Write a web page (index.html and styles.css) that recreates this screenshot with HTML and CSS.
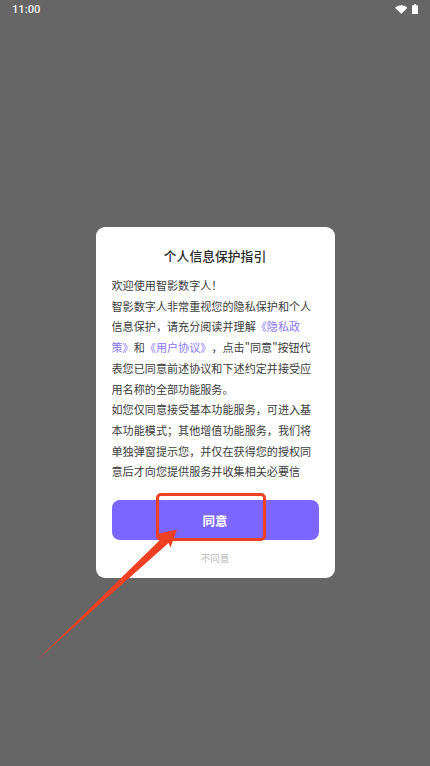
FILE: index.html
```html
<!DOCTYPE html>
<html lang="zh-CN">
<head>
<meta charset="utf-8">
<title>个人信息保护指引</title>
<link rel="stylesheet" href="styles.css">
</head>
<body>
<div class="screen">
  <header class="status">
    <span class="time">11:00</span>
    <span class="status-icons">
      <svg class="wifi" width="12.500" height="9" viewBox="0 0 13 9"><path d="M0 2.6C1.800.9 4 0 6.500 0S11.200.9 13 2.600L6.500 9z" fill="#fff"/></svg>
      <svg class="battery" width="6" height="10.500" viewBox="0 0 6 10"><path d="M2 0h2v1h1.300c.4 0 .7.300.7.700v7.600c0 .4-.3.700-.7.700H.7C.3 10 0 9.700 0 9.300V1.700C0 1.300.3 1 .7 1H2z" fill="#fff"/></svg>
    </span>
  </header>
  <main class="stage">
    <section class="dialog">
      <h1 class="title">个人信息保护指引</h1>
      <div class="body">
        <p>欢迎使用智影数字人！</p>
        <p>智影数字人非常重视您的隐私保护和个人信息保护，请充分阅读并理解<a class="link">《隐私政策》</a>和<a class="link">《用户协议》</a>，点击"同意"按钮代表您已同意前述协议和下述约定并接受应用名称的全部功能服务。</p>
        <p>如您仅同意接受基本功能服务，可进入基本功能模式；其他增值功能服务，我们将单独弹窗提示您，并仅在获得您的授权同意后才向您提供服务并收集相关必要信息。</p>
      </div>
      <button class="agree">同意</button>
      <div class="decline">不同意</div>
    </section>
  </main>
  <div class="mark-box"></div>
  <svg class="mark-arrow" width="430" height="766" viewBox="0 0 430 766"><path d="M37 660 161 539 157 534 177 529.500 170.500 547.500 168.500 543z" fill="#ee4023"/></svg>
</div>
</body>
</html>
```
FILE: styles.css
```css
* { box-sizing: border-box; }
html, body { margin: 0; padding: 0; }
.screen {
  position: relative;
  width: 430px;
  height: 766px;
  overflow: hidden;
  background: #666666;
  font-family: "Noto Sans CJK SC", "Noto Sans", sans-serif;
}
.status {
  display: flex;
  align-items: center;
  justify-content: space-between;
  height: 18px;
  padding: 0 12px;
  color: #f2f2f2;
}
.time {
  font-family: Roboto, sans-serif;
  font-size: 11.200px;
  font-weight: 500;
}
.status-icons { display: flex; align-items: center; gap: 5px; }
.wifi, .battery { display: block; }
.stage {
  display: flex;
  justify-content: center;
  padding-top: 209px;
}
.dialog {
  display: flex;
  flex-direction: column;
  width: 239px;
  height: 350.500px;
  padding: 0 16px;
  background: #ffffff;
  border-radius: 9px;
}
.title {
  margin: 19px 0 0;
  height: 20px;
  font-size: 12.800px;
  line-height: 20px;
  font-weight: 500;
  text-align: center;
  color: #2b2b2b;
}
.body {
  margin-top: 9px;
  height: 207px;
  overflow: hidden;
  font-size: 11.100px;
  line-height: 20.700px;
  color: #3c3c3c;
  text-spacing-trim: space-all;
  word-break: break-all;
}
.body p { margin: 0; }
.link { color: #8b78ff; }
.agree {
  display: block;
  width: 100%;
  height: 40px;
  margin-top: 18px;
  padding: 0;
  border: 0;
  border-radius: 8px;
  background: #7b66ff;
  color: #ffffff;
  font: 700 12.500px "Noto Sans CJK SC", sans-serif;
}
.decline {
  margin-top: 10px;
  font-size: 9.500px;
  line-height: 16px;
  text-align: center;
  color: #b9b9b9;
}
.mark-box {
  position: absolute;
  left: 156px;
  top: 493px;
  width: 110px;
  height: 48px;
  border: 3.500px solid #ee4023;
  border-radius: 5px;
}
.mark-arrow { position: absolute; left: 0; top: 0; }
```
